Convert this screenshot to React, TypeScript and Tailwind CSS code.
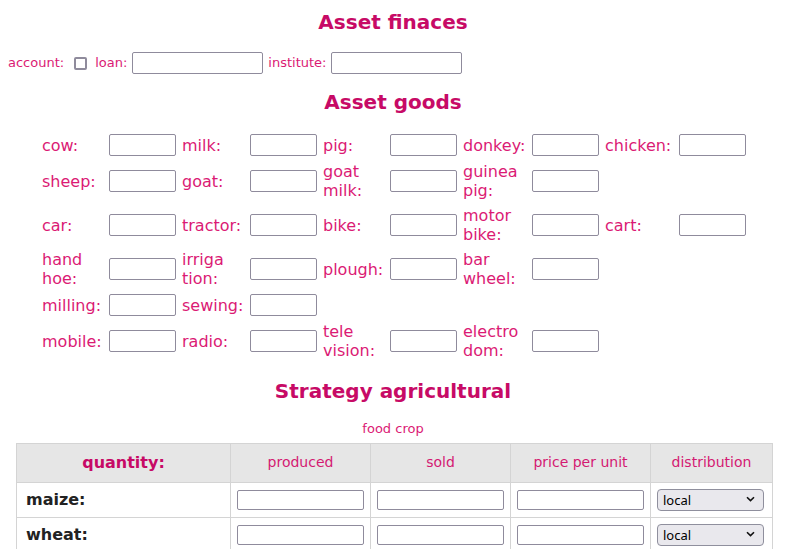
import React from "react";

const goodsRows: (string[] | null)[][] = [
  [["cow:"], ["milk:"], ["pig:"], ["donkey:"], ["chicken:"]],
  [["sheep:"], ["goat:"], ["goat", "milk:"], ["guinea", "pig:"]],
  [["car:"], ["tractor:"], ["bike:"], ["motor", "bike:"], ["cart:"]],
  [["hand", "hoe:"], ["irriga", "tion:"], ["plough:"], ["bar", "wheel:"]],
  [["milling:"], ["sewing:"]],
  [["mobile:"], ["radio:"], ["tele", "vision:"], ["electro", "dom:"]],
];

const crops = ["maize:", "wheat:"];

function Title({ children }: { children: React.ReactNode }) {
  return (
    <h2 className="text-center text-[20px] leading-[24px] font-bold text-[#c70a66]">
      {children}
    </h2>
  );
}

function Box({ w }: { w: string }) {
  return (
    <input
      type="text"
      className={`${w} block border border-[#8f8b9c] rounded-[2px] bg-white`}
    />
  );
}

function Select() {
  return (
    <div className="relative w-[107px]">
      <select className="w-full h-[22px] appearance-none bg-[#e9e8ed] border border-[#8f8f9d] rounded-[4px] pl-[5px] text-[13px] text-black font-['Noto_Sans',sans-serif] leading-[20px]">
        <option>local</option>
        <option>regional</option>
        <option>export</option>
      </select>
      <svg
        className="absolute right-[9px] top-[8px] pointer-events-none"
        width="9"
        height="6"
        viewBox="0 0 9 6"
      >
        <path d="M1 1.2 L4.5 4.6 L8 1.2" fill="none" stroke="#111" strokeWidth="1.6" />
      </svg>
    </div>
  );
}

export default function App() {
  return (
    <div className="w-[786px] h-[549px] overflow-hidden bg-white font-['DejaVu_Sans',sans-serif] text-[#db1a74]">
      {/* finances */}
      <div className="pt-[10px]">
        <Title>Asset finaces</Title>
      </div>
      <div className="mt-[18px] flex items-center pl-[8px] text-[13px] leading-[16px]">
        <span>account:</span>
        <span className="ml-[10px] w-[13px] h-[13px] border-2 border-[#8f8b9c] rounded-[2px]" />
        <span className="ml-[8px]">loan:</span>
        <input type="text" className="ml-[5px] w-[131px] h-[22px] border border-[#8f8b9c] rounded-[2px]" />
        <span className="ml-[5px]">institute:</span>
        <input type="text" className="ml-[5px] w-[131px] h-[22px] border border-[#8f8b9c] rounded-[2px]" />
      </div>

      {/* goods */}
      <div className="mt-[16px]">
        <Title>Asset goods</Title>
      </div>
      <div className="mt-[17px] pl-[42px]">
        {goodsRows.map((row, ri) => (
          <div
            key={ri}
            className="grid grid-cols-[67px_73px_68px_73px_67px_73px_69px_73px_74px_73px] items-center py-[3px] min-h-[28px] text-[16px] leading-[19px]"
          >
            {row.map((label, ci) => (
              <React.Fragment key={ci}>
                <span className="whitespace-nowrap">
                  {label!.map((part, pi) => (
                    <span key={pi} className="block">
                      {part}
                    </span>
                  ))}
                </span>
                <input
                  type="text"
                  className="w-[67px] h-[22px] border border-[#8f8b9c] rounded-[2px]"
                />
              </React.Fragment>
            ))}
          </div>
        ))}
      </div>

      {/* strategy */}
      <div className="mt-[16px]">
        <Title>Strategy agricultural</Title>
      </div>
      <p className="mt-[18px] text-center text-[13px] leading-[16px]">food crop</p>
      <table className="mt-[6px] mx-[16px] w-[756px] border-collapse table-fixed">
        <colgroup>
          <col className="w-[214px]" />
          <col className="w-[140px]" />
          <col className="w-[140px]" />
          <col className="w-[140px]" />
          <col className="w-[122px]" />
        </colgroup>
        <thead>
          <tr className="h-[39px] bg-[#e6e6e6]">
            <th className="border border-[#d4d4d4] text-[16px] font-bold text-[#c70a66]">
              quantity:
            </th>
            {["produced", "sold", "price per unit", "distribution"].map((h) => (
              <th
                key={h}
                className="border border-[#d4d4d4] text-[14px] font-normal text-[#d41a72] pb-[2px]"
              >
                {h}
              </th>
            ))}
          </tr>
        </thead>
        <tbody>
          {crops.map((c) => (
            <tr key={c} className="h-[35px]">
              <td className="border border-[#d4d4d4] pl-[9px] text-[16px] font-bold text-[#222]">
                {c}
              </td>
              {[0, 1, 2].map((i) => (
                <td key={i} className="border border-[#d4d4d4] px-[6px]">
                  <Box w="w-[127px] h-[20px]" />
                </td>
              ))}
              <td className="border border-[#d4d4d4] px-[6px]">
                <Select />
              </td>
            </tr>
          ))}
        </tbody>
      </table>
    </div>
  );
}
